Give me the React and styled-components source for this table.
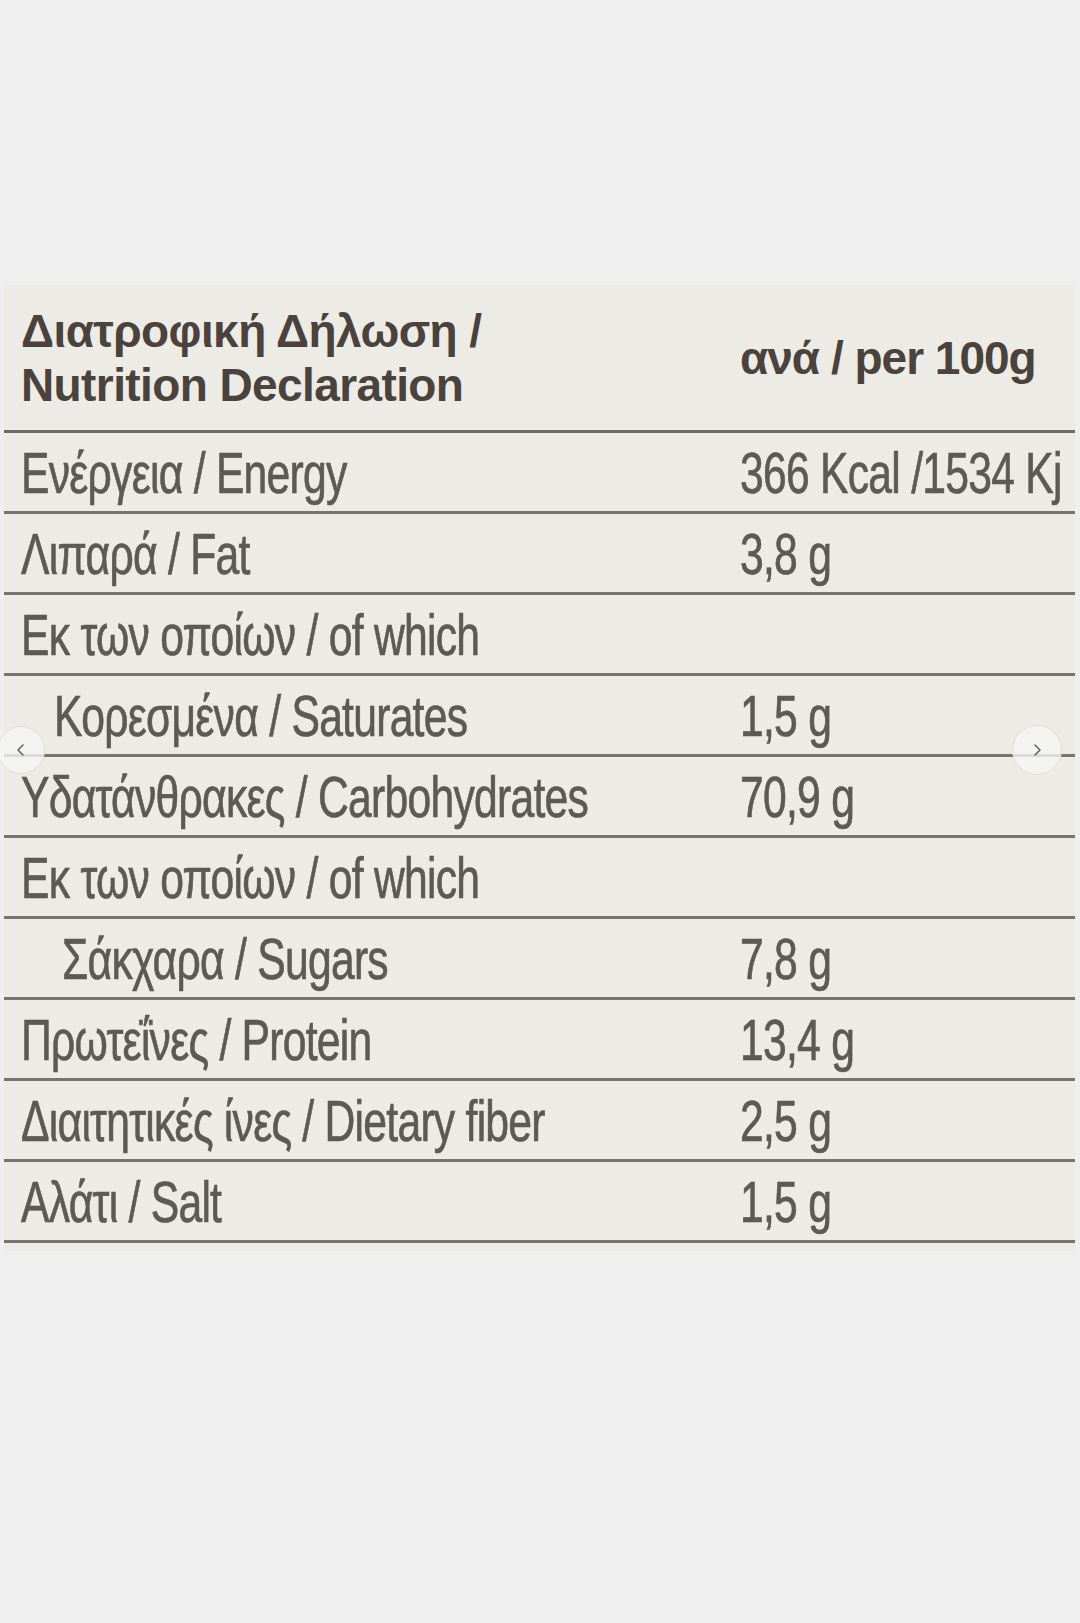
import React from 'react';
import styled, { createGlobalStyle } from 'styled-components';

const GlobalStyle = createGlobalStyle`
  html, body {
    margin: 0;
    padding: 0;
    background: #efefef;
  }
  body {
    font-family: "Liberation Sans", Arial, sans-serif;
    color: #5b5a54;
  }
`;

const Page = styled.div`
  width: 1080px;
  height: 1623px;
  padding-top: 285px;
  box-sizing: border-box;
  position: relative;
  overflow: hidden;
`;

const Card = styled.div`
  margin-left: 4px;
  width: 1071px;
  background: #ecebe5;
  padding-bottom: 8px;
`;

const Header = styled.div`
  display: grid;
  grid-template-columns: 736px 1fr;
  align-items: center;
  height: 145px;
  border-bottom: 3px solid #6f6c63;
  color: #4a423b;
  font-weight: 700;
`;

const Title = styled.div`
  padding-left: 17px;
  font-size: 46px;
  line-height: 54px;
  letter-spacing: -0.6px;
`;

const PerLabel = styled.div`
  font-size: 46px;
  letter-spacing: -1px;
`;

const Row = styled.div`
  display: grid;
  grid-template-columns: 736px 1fr;
  align-items: center;
  height: 78px;
  border-bottom: 3px solid #77746b;
`;

const Cell = styled.div`
  padding-left: ${(p) => p.indent || 0}px;
  overflow: hidden;
  white-space: nowrap;
`;

/* the printed label uses a condensed face: narrow the regular one */
const Narrow = styled.span`
  display: inline-block;
  font-size: 58px;
  letter-spacing: -1px;
  -webkit-text-stroke: 0.7px currentColor;
  transform: scaleX(0.735);
  transform-origin: left center;
`;

const NavButton = styled.div`
  position: absolute;
  top: ${(p) => p.top}px;
  left: ${(p) => p.left}px;
  width: ${(p) => p.size}px;
  height: ${(p) => p.size}px;
  box-sizing: border-box;
  border-radius: 50%;
  background: rgba(245, 245, 243, 0.8);
  border: 1px solid #e0ded6;
  display: flex;
  align-items: center;
  justify-content: center;
  color: #666660;
`;

const rows = [
  { label: 'Ενέργεια / Energy', value: '366 Kcal /1534 Kj' },
  { label: 'Λιπαρά / Fat', value: '3,8 g' },
  { label: 'Εκ των οποίων / of which', value: '' },
  { label: 'Κορεσμένα / Saturates', value: '1,5 g', indent: 33 },
  { label: 'Υδατάνθρακες / Carbohydrates', value: '70,9 g' },
  { label: 'Εκ των οποίων / of which', value: '' },
  { label: 'Σάκχαρα / Sugars', value: '7,8 g', indent: 41 },
  { label: 'Πρωτεΐνες / Protein', value: '13,4 g' },
  { label: 'Διαιτητικές ίνες / Dietary fiber', value: '2,5 g' },
  { label: 'Αλάτι / Salt', value: '1,5 g' },
];

const Chevron = ({ dir }) => (
  <svg width="12" height="14" viewBox="0 0 12 14" fill="none" stroke="currentColor" strokeWidth="1.6" strokeLinecap="round" strokeLinejoin="round">
    {dir === 'left' ? <path d="M8 2 L3 7 L8 12" /> : <path d="M4 2 L9 7 L4 12" />}
  </svg>
);

export default function App() {
  return (
    <Page>
      <GlobalStyle />
      <Card>
        <Header>
          <Title>
            Διατροφική Δήλωση /<br />
            Nutrition Declaration
          </Title>
          <PerLabel>ανά / per 100g</PerLabel>
        </Header>
        {rows.map((r, i) => (
          <Row key={i}>
            <Cell indent={17 + (r.indent || 0)}>
              <Narrow>{r.label}</Narrow>
            </Cell>
            <Cell>
              <Narrow>{r.value}</Narrow>
            </Cell>
          </Row>
        ))}
      </Card>
      <NavButton left={-3} top={726} size={48}>
        <Chevron dir="left" />
      </NavButton>
      <NavButton left={1012} top={725} size={50}>
        <Chevron dir="right" />
      </NavButton>
    </Page>
  );
}
